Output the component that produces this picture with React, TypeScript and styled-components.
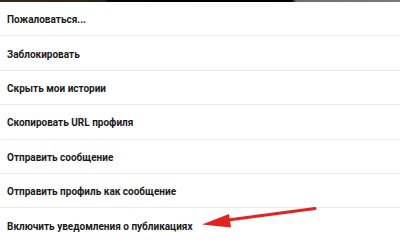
import React from 'react';
import styled, { createGlobalStyle } from 'styled-components';

const GlobalStyle = createGlobalStyle`
  html, body {
    margin: 0;
    padding: 0;
    background: #fff;
  }
`;

const Screen = styled.div`
  position: relative;
  width: 400px;
  height: 241px;
  overflow: hidden;
  background: #fff;
  font-family: Roboto, 'Liberation Sans', sans-serif;
`;

const TopStrip = styled.div`
  height: 2px;
  background: linear-gradient(
    90deg,
    #3a2a18 0%,
    #2a2014 26%,
    #050505 27%,
    #000 73%,
    #6e6e6e 74%,
    #7a7a7a 100%
  );
`;

const Menu = styled.ul`
  list-style: none;
  margin: 0;
  padding: 0;
`;

const Item = styled.li<{ $last?: boolean }>`
  display: flex;
  align-items: center;
  box-sizing: border-box;
  height: 34.4px;
  padding: 2px 0 0 7px;
  font-size: 10px;
  font-weight: 700;
  color: #1a1a1a;
  border-bottom: ${(p) => (p.$last ? 'none' : '1px solid #ebebeb')};
`;

const Arrow = styled.svg`
  position: absolute;
  left: 0;
  top: 0;
  pointer-events: none;
`;

const items = [
  'Пожаловаться...',
  'Заблокировать',
  'Скрыть мои истории',
  'Скопировать URL профиля',
  'Отправить сообщение',
  'Отправить профиль как сообщение',
  'Включить уведомления о публикациях',
];

const App: React.FC = () => {
  return (
    <Screen>
      <GlobalStyle />
      <TopStrip />
      <Menu>
        {items.map((t, i) => (
          <Item key={t} $last={i === items.length - 1}>
            {t}
          </Item>
        ))}
      </Menu>
      {/* red pointer arrow */}
      <Arrow width="400" height="241" viewBox="0 0 400 241">
        <path d="M315 208.5 L228 220" stroke="#e3231f" strokeWidth="3" strokeLinecap="round" />
        <path d="M202 224.5 L229 214 L231 227.5 Z" fill="#e3231f" />
      </Arrow>
    </Screen>
  );
};

export default App;
